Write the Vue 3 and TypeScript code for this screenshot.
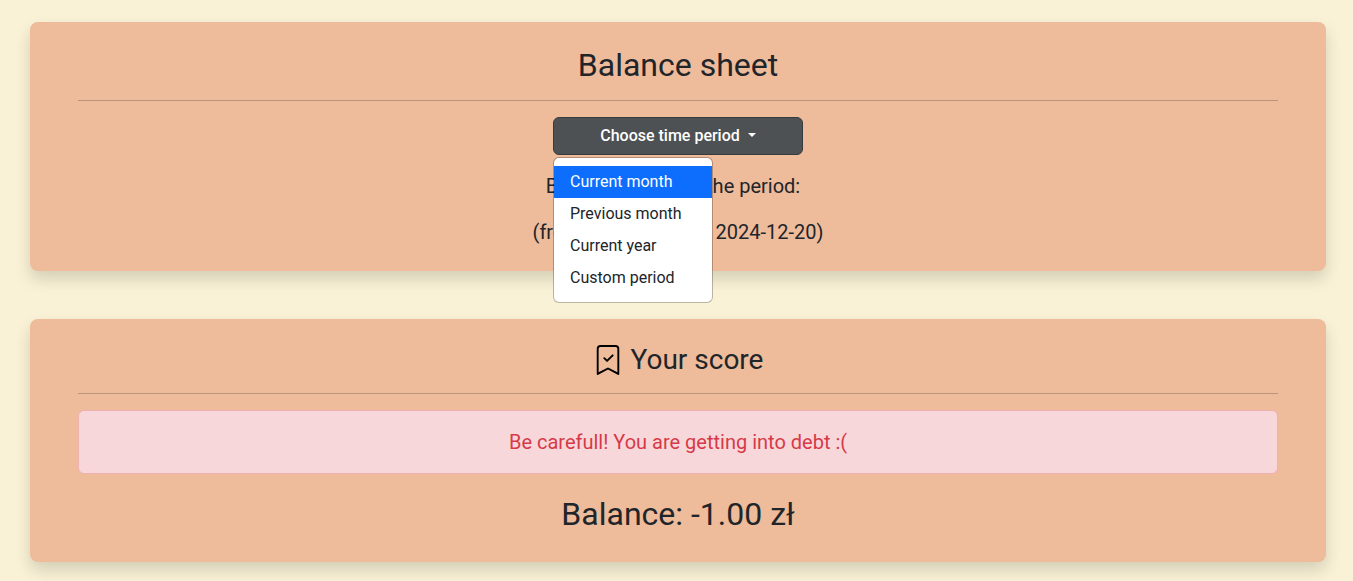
<script setup lang="ts">
import { ref } from 'vue'

const periods: string[] = ['Current month', 'Previous month', 'Current year', 'Custom period']
const selected = ref('Current month')
const open = ref(true)
const from = '2024-12-01'
const to = '2024-12-20'
const balance = -1

function choose(period: string) {
  selected.value = period
  open.value = false
}
</script>

<template>
  <main class="page">
    <section class="card">
      <h2 class="title">Balance sheet</h2>
      <hr class="rule" />
      <div class="dropdown">
        <button class="toggle" type="button" aria-haspopup="true" :aria-expanded="open" @click="open = !open">
          Choose time period<span class="caret"></span>
        </button>
        <ul v-if="open" class="menu">
          <li v-for="period in periods" :key="period">
            <a href="#" class="item" :class="{ active: period === selected }" @click.prevent="choose(period)">{{ period }}</a>
          </li>
        </ul>
      </div>
      <p class="text label">Balance sheet for the period:</p>
      <p class="text">(from {{ from }} to {{ to }})</p>
    </section>

    <section class="card">
      <h3 class="subtitle">
        <svg class="icon" viewBox="0 0 16 16" fill="#000" aria-hidden="true">
          <path fill-rule="evenodd" d="M10.854 5.146a.5.5 0 0 1 0 .708l-3 3a.5.5 0 0 1-.708 0l-1.500-1.500a.5.5 0 1 1 .708-.708L7.500 7.793l2.646-2.647a.5.5 0 0 1 .708 0z" />
          <path d="M2 2a2 2 0 0 1 2-2h8a2 2 0 0 1 2 2v13.500a.5.5 0 0 1-.777.416L8 13.101l-5.223 2.815A.5.5 0 0 1 2 15.500V2zm2-1a1 1 0 0 0-1 1v12.566l4.723-2.482a.5.5 0 0 1 .554 0L13 14.566V2a1 1 0 0 0-1-1H4z" />
        </svg>
        <span>Your score</span>
      </h3>
      <hr class="rule" />
      <div class="alert" role="alert">Be carefull! You are getting into debt :(</div>
      <p class="balance">Balance: {{ balance.toFixed(2) }} zł</p>
    </section>
  </main>
</template>

<style>
body {
  margin: 0;
  background: #f9f2d6;
}
</style>

<style scoped>
.page {
  display: flex;
  flex-direction: column;
  gap: 48px;
  padding: 22px 27px 19px 30px;
  font-family: Roboto, "Liberation Sans", sans-serif;
  font-size: 16px;
  line-height: 24px;
  color: #212529;
}
.card {
  padding: 24px 48px;
  border-radius: 8px;
  background: #eebb9b;
  box-shadow: 0 8px 16px rgba(0, 0, 0, 0.15);
  text-align: center;
}
.title,
.subtitle {
  margin: 0;
  font-weight: 400;
}
.title {
  font-size: 32px;
  line-height: 38px;
}
.subtitle {
  display: flex;
  align-items: center;
  justify-content: center;
  gap: 8px;
  font-size: 28px;
  line-height: 34px;
}
.icon {
  width: 30px;
  height: 30px;
}
.rule {
  margin: 16px 0;
  border: 0;
  border-top: 1px solid #212529;
  opacity: 0.25;
}
.dropdown {
  position: relative;
  width: 250px;
  margin: 0 auto 16px;
}
.toggle {
  display: block;
  width: 100%;
  padding: 6px 12px;
  border: 1px solid #373b3e;
  border-radius: 6px;
  background: #4d5154;
  color: #fff;
  font-family: inherit;
  font-size: 16px;
  font-weight: 500;
  line-height: 24px;
  cursor: pointer;
}
.caret {
  display: inline-block;
  margin-left: 8px;
  vertical-align: 4px;
  border-top: 4px solid;
  border-right: 4px solid transparent;
  border-left: 4px solid transparent;
}
.menu {
  position: absolute;
  top: 100%;
  left: 0;
  z-index: 1;
  box-sizing: border-box;
  min-width: 160px;
  margin: 2px 0 0;
  padding: 8px 0;
  border: 1px solid rgba(0, 0, 0, 0.25);
  border-radius: 6px;
  background: #fff;
  background-clip: padding-box;
  list-style: none;
  text-align: left;
}
.item {
  display: block;
  padding: 4px 16px;
  color: #212529;
  text-decoration: none;
  white-space: nowrap;
}
.item.active {
  background: #0d6efd;
  color: #fff;
}
.text {
  margin: 0 0 16px;
  font-size: 20px;
  line-height: 30px;
}
.text:last-child {
  margin-bottom: 0;
}
.label {
  padding-right: 10px;
}
.alert {
  margin-bottom: 16px;
  padding: 16px;
  border: 1px solid #efb0b2;
  border-radius: 6px;
  background: #f8d7da;
  color: #d63a48;
  font-size: 20px;
  line-height: 30px;
}
.balance {
  margin: 0;
  font-size: 32px;
  line-height: 48px;
}
</style>
